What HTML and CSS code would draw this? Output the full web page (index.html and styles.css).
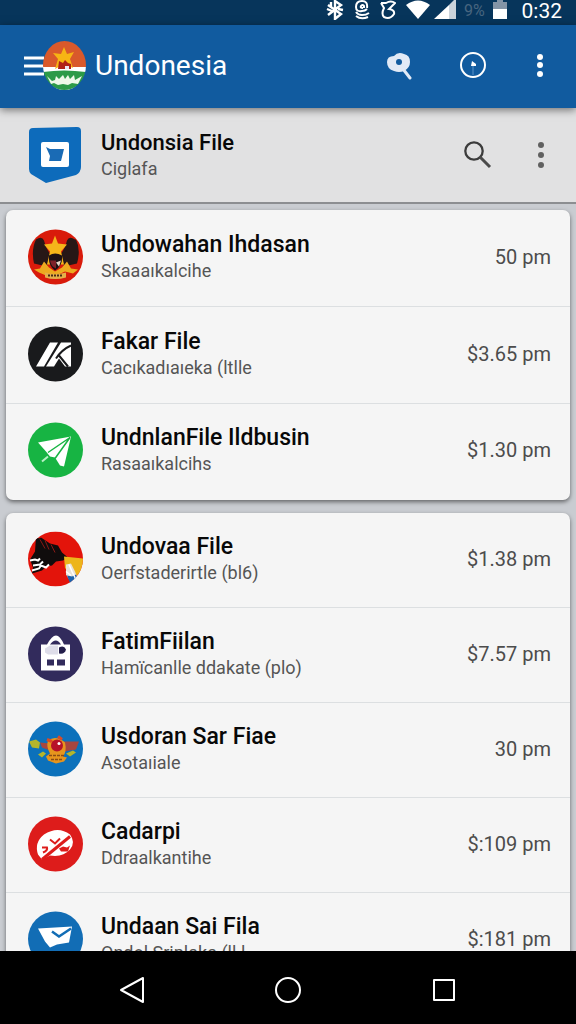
FILE: index.html
```
<!DOCTYPE html>
<html lang="id">

<head>
    <meta charset="UTF-8">
    <meta name="viewport" content="width=device-width, initial-scale=1.0">
    <title>Undonesia</title>
    <link rel="stylesheet" href="styles.css">
</head>

<body>
    <!-- status bar -->
    <div class="status">
        <svg width="18" height="20" viewBox="0 0 18 20"><path d="M2 5l13 9-6 5V1l6 4-13 10M1 9l5 2M12 9l5 1M5 2v5" fill="none" stroke="#fff" stroke-width="2.4"/></svg>
        <svg class="gap-m" width="16" height="20" viewBox="0 0 16 20"><path d="M13 8q1-7-5-7-6 0-6 6 0 5 6 4 3 0 5-2M9 8q-3 0-2-2 2-2 3 0v2M2 12q2 3 6 3 4 0 7-2M2 16q5 4 12 1" fill="none" stroke="#fff" stroke-width="2"/></svg>
        <svg class="gap-m" width="16" height="20" viewBox="0 0 16 20"><path d="M1 3h5q5-3 9 0l-6 6q6 1 5 5-4 6-10 3-3-3 0-9L1 3" fill="none" stroke="#fff" stroke-width="2"/></svg>
        <svg class="gap-m" width="24" height="20" viewBox="0 0 24 20"><path d="M0 5Q12-4 24 5L12 19z" fill="#fff"/></svg>
        <svg class="gap-s" width="22" height="20" viewBox="0 0 22 20"><path d="M0 19L15 5v14z" fill="#fff"/><path d="M15 5l7-7v21h-7z" fill="#cbd3db"/></svg>
        <span class="percent">9%</span>
        <svg width="14" height="20" viewBox="0 0 14 20"><path d="M0 2h4V0h6v2h4v7H0z" fill="#8494a6"/><path d="M0 9h14v10H0z" fill="#fff"/></svg>
        <span class="time">0:32</span>
    </div>

    <!-- app bar -->
    <header class="appbar">
        <button class="menu" aria-label="Menu">
            <svg width="20" height="20" viewBox="0 0 20 20"><path d="M0 2h20M0 10h20M0 18h20" stroke="#fff" stroke-width="3"/></svg>
        </button>
        <svg class="flag" width="43" height="49" viewBox="0 0 43 49">
            <clipPath id="flagClip"><ellipse cx="21.5" cy="24.5" rx="21.5" ry="24.5"/></clipPath>
            <g clip-path="url(#flagClip)">
                <path d="M0 0h43v26H0z" fill="#d9592b"/>
                <path d="M0 26h43v5H0z" fill="#fff"/>
                <path d="M0 31q21-3 43 0v18H0z" fill="#2c9a48"/>
                <path d="M4 35l5 5 3-1 1-4 3 3 4-4 2 4 3-4 2 4 4-4 1 5 7-4-4 8-6-1-4 2-5-1-5 1-4-2-3 1z" fill="#eef8e9"/>
                <path d="M9 45q12 8 25 0l-3 5H12z" fill="#eef8e9"/>
                <path d="M21 6l3 7 7-2-4 7 3 9-9-4-9 5 3-10-5-6 8 1z" fill="#f7b414"/>
                <path d="M16 20l4 2 2-3 3 3 3 1v5H15z" fill="#b02118"/>
                <path d="M22 25h4v3h-4z" fill="#e8e4f2"/>
            </g>
        </svg>
        <h1>Undonesia</h1>
        <button aria-label="Find">
            <svg width="28" height="28" viewBox="0 0 28 28"><path d="M1 10Q1 4 8 4q4-5 10-2 6 1 6 8 0 6-6 9-5 2-10 0-7-2-7-9z" fill="#e2eaf6"/><path d="M17 17l7 9" stroke="#e2eaf6" stroke-width="3" stroke-linecap="round"/><circle cx="13" cy="10" r="3" fill="#115b9f"/></svg>
        </button>
        <button aria-label="Recent">
            <svg width="28" height="28" viewBox="0 0 28 28"><circle cx="14" cy="13" r="12" fill="none" stroke="#fff" stroke-width="2"/><path d="M12 14l1-5 4 3v2z" fill="#fff"/><path d="M14 14v9" stroke="#5c93c7" stroke-width="1"/></svg>
        </button>
        <button class="more" aria-label="More">
            <svg width="8" height="26" viewBox="0 0 8 26"><g fill="#fff"><circle cx="4" cy="4" r="3"/><circle cx="4" cy="12" r="3"/><circle cx="4" cy="21" r="3"/></g></svg>
        </button>
    </header>

    <!-- current folder -->
    <section class="folder">
        <svg class="shield" width="52" height="56" viewBox="0 0 52 56">
            <path d="M4 1l44-1q4 0 4 4v36q0 5-5 8L17 56 2 47q-2-2-2-5V5q0-4 4-4z" fill="#0d6bbb"/>
            <rect x="12" y="15" width="28" height="25" rx="2" fill="#fff"/>
            <path d="M17 20l4 2h14l-3 12H20l1-5z" fill="#1a6bb5"/>
        </svg>
        <div class="text">
            <h2>Undonsia File</h2>
            <p>Ciglafa</p>
        </div>
        <button class="search" aria-label="Search">
            <svg width="28" height="28" viewBox="0 0 28 28"><circle cx="10" cy="10" r="8.7" fill="none" stroke="#3c3c3c" stroke-width="2.3"/><path d="M16 16l10 10" stroke="#4a4a4a" stroke-width="3"/></svg>
        </button>
        <button class="more" aria-label="Folder options">
            <svg width="8" height="26" viewBox="0 0 8 26"><g fill="#606060"><circle cx="4" cy="3" r="3"/><circle cx="4" cy="13" r="3"/><circle cx="4" cy="23" r="3"/></g></svg>
        </button>
    </section>

    <main>
        <ul class="card tall">
            <li>
                <svg class="icon" viewBox="0 0 55 55">
                    <circle cx="27.5" cy="27.5" r="27.5" fill="#d91b0b"/>
                    <path d="M8 10q6-4 8 1 2 8 6 13l-3 13-13-3Q3 20 8 10zM47 10q-6-4-8 1-2 8-6 13l3 13 13-3q4-14-1-24z" fill="#271716"/>
                    <path d="M27 6l3 8 9 1-6 7 3 13H19l3-13-6-7 8-1z" fill="#f5b51a"/>
                    <path d="M21 26q6-4 13 0 1 10-7 15-7-5-6-15z" fill="#1c1014"/>
                    <path d="M22 31h6v8q-5-2-6-8z" fill="#7e2029"/>
                    <path d="M28 33l5-2-2 6z" fill="#e7d5c8"/>
                    <path d="M6 40l6-1 4-7 5 6 6 4 7-4 5-6 4 7 7 1-5 4-8-2-9 4H18l-7-3z" fill="#edaa20"/>
                    <path d="M17 43q10 3 21 0v5q-11 3-21 0z" fill="#e4b04a"/>
                    <path d="M20 46h15" stroke="#4a2b14" stroke-width="2" stroke-dasharray="2 1"/>
                </svg>
                <div class="text">
                    <h3>Undowahan Ihdasan</h3>
                    <p>Skaaaıkalcihe</p>
                </div>
                <span class="price">50 pm</span>
            </li>
            <li>
                <svg class="icon" viewBox="0 0 55 55">
                    <circle cx="27.5" cy="27.5" r="27.5" fill="#191a1c"/>
                    <path d="M8 40L22 16h8L16 40zM18 40L33 16h10v24h-6l-6-8-5 8z" fill="#fff"/>
                    <path d="M43 19q-9 4-15 13M31 29l9 11" stroke="#191a1c" stroke-width="2" fill="none"/>
                </svg>
                <div class="text">
                    <h3>Fakar File</h3>
                    <p>Cacıkadıaıeka (ltlle</p>
                </div>
                <span class="price">$3.65 pm</span>
            </li>
            <li>
                <svg class="icon" viewBox="0 0 55 55">
                    <circle cx="27.5" cy="27.5" r="27.5" fill="#17b443"/>
                    <path d="M10 20l33-6-7 30-4-1-5-8-5-1-4-5z" fill="#fff"/>
                    <path d="M42 15L20 30M42 15L27 36" stroke="#17b443" stroke-width="1.5"/>
                    <path d="M14 39l6-5" stroke="#b9f0c6" stroke-width="2"/>
                </svg>
                <div class="text">
                    <h3>UndnlanFile Ildbusin</h3>
                    <p>Rasaaıkalcihs</p>
                </div>
                <span class="price">$1.30 pm</span>
            </li>
        </ul>

        <ul class="card">
            <li>
                <svg class="icon" viewBox="0 0 55 55">
                    <clipPath id="round"><circle cx="27.5" cy="27.5" r="27.5"/></clipPath>
                    <g clip-path="url(#round)">
                        <path d="M0 0h55v55H0z" fill="#e3140b"/>
                        <path d="M8 5l3 2 2-1 9 6 8 2 4 7 6 5-5 3-7 1-4 4-6 1-4 4-10 3 1-6-3-8 5-8z" fill="#100c0c"/>
                        <path d="M12 8l5 9M17 9l4 9M23 13l4 8" stroke="#8b1a16" stroke-width="1"/>
                        <path d="M2 29l5-1 3 1 2-2M4 39l7-2 2-3 5 2 3-3M5 34l7-1 3-3" fill="none" stroke="#fff" stroke-width="2"/>
                        <path d="M36 25l19 2v14l-7 3-4-6-7-1z" fill="#edb51b"/>
                        <path d="M38 33l5-1 4 8 3 8-7 3-5-8z" fill="#e9e2d8"/>
                        <path d="M39 44l5 1 4-2 3 8-8 3z" fill="#1c62ac"/>
                        <path d="M41 33l3 7 3 6 1 7M38 40l5 4" stroke="#fff" fill="none" stroke-width="1.5"/>
                    </g>
                </svg>
                <div class="text">
                    <h3>Undovaa File</h3>
                    <p>Oerfstaderirtle (bl6)</p>
                </div>
                <span class="price">$1.38 pm</span>
            </li>
            <li>
                <svg class="icon" viewBox="0 0 55 55">
                    <circle cx="27.5" cy="27.5" r="27.5" fill="#322b5c"/>
                    <path d="M13 18h6q5-9 9-9t8 9h6v26H13zM22 18h11q-5-8-11 0z" fill="#fff" fill-rule="evenodd"/>
                    <path d="M17 22l5-3h8v9H20l-3-2z" fill="#dedde9"/>
                    <path d="M31 21q5-3 7 2-1 5-7 4z" fill="#241e4b"/>
                    <path d="M19 33h7v6h-7zM29 33h8v6h-8z" fill="#322b5c"/>
                </svg>
                <div class="text">
                    <h3>FatimFiilan</h3>
                    <p>Hamïcanlle ddakate (plo)</p>
                </div>
                <span class="price">$7.57 pm</span>
            </li>
            <li>
                <svg class="icon" viewBox="0 0 55 55">
                    <circle cx="27.5" cy="27.5" r="27.5" fill="#0c71bb"/>
                    <path d="M34 20h17l-3 8-12 2zM12 21l10 1v7l-8-3z" fill="#a84640"/>
                    <path d="M1 20l7-2 4 3-1 6-7-1zM10 33l5-3 3 2-4 4zM38 32l7-3 3 2-6 4z" fill="#b4b52c"/>
                    <path d="M20 19q8-6 17 2 2 9-2 14l4 1-3 4-8 2-8-3-2-4 4-3q-4-7-2-13z" fill="#e7951d"/>
                    <circle cx="29" cy="24" r="6" fill="#b71329"/>
                    <circle cx="31" cy="22" r="1.5" fill="#fff"/>
                    <path d="M19 18l5 2M30 15l4 3" stroke="#dc4b26" stroke-width="3"/>
                    <path d="M21 34h16M23 38h12" stroke="#8a4c15" stroke-width="1.5" stroke-dasharray="3 1"/>
                </svg>
                <div class="text">
                    <h3>Usdoran Sar Fiae</h3>
                    <p>Asotaıiale</p>
                </div>
                <span class="price">30 pm</span>
            </li>
            <li>
                <svg class="icon" viewBox="0 0 55 55">
                    <circle cx="27.5" cy="27.5" r="27.5" fill="#dd1c1b"/>
                    <path d="M10 38q-4-12 6-20 14-9 26 0 6 8 0 15-7 8-20 6l-8 4z" fill="#fff"/>
                    <path d="M14 43L42 20" stroke="#dd1c1b" stroke-width="3"/>
                    <path d="M22 23l5 4 5-5M14 31h5q1 3-4 5" fill="none" stroke="#dd1c1b" stroke-width="2"/>
                    <path d="M31 32l4-2 4 1 3-2-2 6h-7z" fill="#dd1c1b"/>
                </svg>
                <div class="text">
                    <h3>Cadarpi</h3>
                    <p>Ddraalkantihe</p>
                </div>
                <span class="price">$:109 pm</span>
            </li>
            <li>
                <svg class="icon" viewBox="0 0 55 55">
                    <circle cx="27.5" cy="27.5" r="27.5" fill="#126db5"/>
                    <path d="M10 17l34-2-3 16-12 2-7 3-5-6z" fill="#fff"/>
                    <path d="M24 20l7 5 12-8" fill="none" stroke="#126db5" stroke-width="2.5"/>
                </svg>
                <div class="text">
                    <h3>Undaan Sai Fila</h3>
                    <p>Ondol Sriplaka (ll.l</p>
                </div>
                <span class="price">$:181 pm</span>
            </li>
        </ul>
    </main>

    <!-- system navigation -->
    <nav>
        <button aria-label="Back"><svg width="28" height="28" viewBox="0 0 28 28"><path d="M25 2v24L3 14z"/></svg></button>
        <button aria-label="Home"><svg width="28" height="28" viewBox="0 0 28 28"><circle cx="14" cy="14" r="12"/></svg></button>
        <button aria-label="Overview"><svg width="28" height="28" viewBox="0 0 28 28"><path d="M4 4h20v20H4z"/></svg></button>
    </nav>
</body>

</html>
```
FILE: styles.css
```
* {
    margin: 0;
    padding: 0;
    box-sizing: border-box;
}

body {
    display: flex;
    flex-direction: column;
    height: 100vh;
    overflow: hidden;
    background-color: #c9ccd1;
    font-family: Roboto, "Liberation Sans", sans-serif;
    color: #080808;
}

button {
    display: flex;
    border: none;
    background: none;
}

svg {
    display: block;
    flex: none;
}

/* status bar */
.status {
    display: flex;
    flex: none;
    align-items: center;
    justify-content: flex-end;
    height: 25px;
    padding: 0 14px 5px 0;
    background-color: #07355b;
    color: #fff;
}

.gap-m {
    margin-left: 10px;
}

.gap-s {
    margin-left: 4px;
}

.percent {
    width: 37px;
    padding-left: 8px;
    font-size: 16px;
    color: #47657f;
}

.time {
    width: 55px;
    padding-top: 1px;
    text-align: right;
    font-size: 21px;
    line-height: 24px;
}

/* app bar */
.appbar {
    position: relative;
    display: flex;
    flex: none;
    align-items: center;
    height: 83px;
    padding: 0 32px 2px 24px;
    background-color: #115b9f;
    color: #fff;
    box-shadow: 0 2px 8px rgba(0, 0, 0, 0.5);
}

.flag {
    margin: 0 9px 0 -1px;
}

h1 {
    flex: 1;
    font-size: 28px;
    font-weight: 400;
}

.appbar button + button {
    margin-left: 45px;
}

.appbar .more,
.folder .more {
    margin-left: 45px;
}

.appbar button + .more {
    margin-left: 49px;
}

/* current folder */
.folder {
    display: flex;
    flex: none;
    align-items: center;
    height: 96px;
    padding: 0 31px 0 29px;
    background-color: #e1e1e2;
    border-bottom: 2px solid #8c8e91;
}

.text {
    flex: 1;
    min-width: 0;
    white-space: nowrap;
}

.folder .text {
    margin-left: 20px;
}

h2,
h3 {
    font-size: 23px;
    font-weight: 500;
    line-height: 28px;
}

h2 {
    font-size: 22px;
}

p {
    font-size: 18px;
    line-height: 24px;
    color: #555;
}

/* file cards */
main {
    flex: 1;
    min-height: 0;
    padding: 6px 6px 0;
    overflow: hidden;
}

.card {
    margin-bottom: 13px;
    list-style: none;
    background-color: #f5f5f5;
    border-radius: 7px;
    box-shadow: 0 2px 4px rgba(0, 0, 0, 0.5);
}

.card li {
    display: flex;
    align-items: center;
    height: 95px;
    padding: 0 19px 2px 22px;
    border-bottom: 1px solid #dcdfe1;
}

.tall li {
    height: 97px;
}

.card li:last-child {
    height: 96px;
    padding-bottom: 4px;
    border-bottom: none;
}

.icon {
    width: 55px;
    height: 56px;
    margin-right: 18px;
}

.price {
    font-size: 20px;
    color: #4c4c4c;
}

/* system navigation */
nav {
    display: flex;
    flex: none;
    align-items: center;
    justify-content: center;
    gap: 128px;
    height: 73px;
    padding-top: 4px;
    background-color: #000;
}

nav svg {
    fill: none;
    stroke: #fff;
    stroke-width: 2;
    stroke-linejoin: round;
}
```
